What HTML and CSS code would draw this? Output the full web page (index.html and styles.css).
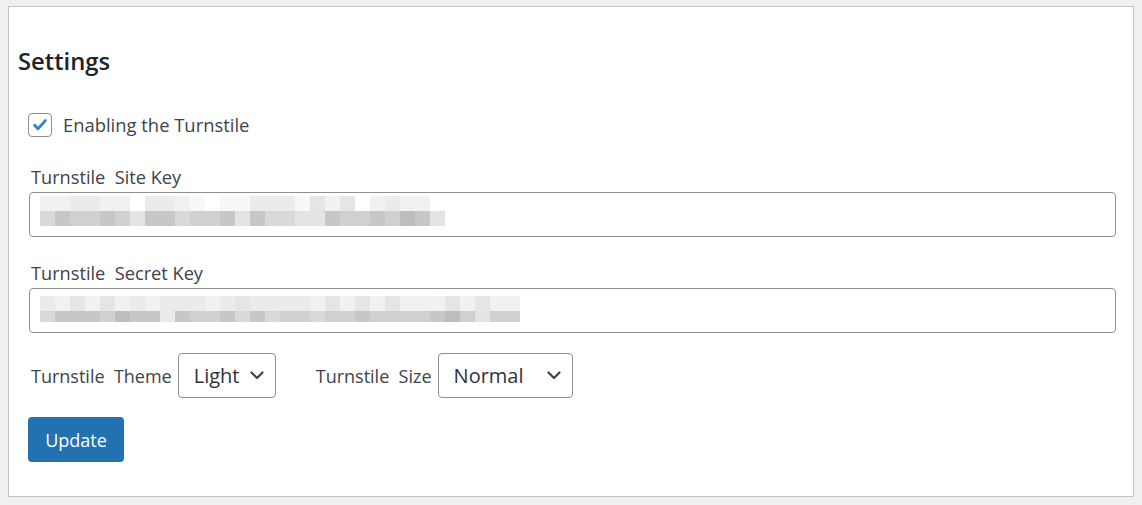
FILE: index.html
```html
<!DOCTYPE html>
<html lang="en">
<head>
<meta charset="utf-8">
<title>Settings</title>
<link rel="stylesheet" href="styles.css">
</head>
<body>
<div class="panel">
  <h2 class="title">Settings</h2>
  <form class="form">
    <label class="check-row">
      <span class="checkbox">
        <svg viewBox="0 0 24 24" width="24" height="24"><path d="M6.2 12.4l3.6 3.8 8-9" fill="none" stroke="#3582c4" stroke-width="3.2" stroke-linecap="round" stroke-linejoin="round"/></svg>
      </span>
      <span class="check-text">Enabling the Turnstile</span>
    </label>

    <div class="field">
      <div class="label">Turnstile&nbsp; Site Key</div>
      <div class="input site">
        <div class="mosaic">
          <div class="row r15"><span class="a"></span><span class="a"></span><span class="b"></span><span class="b"></span><span class="a"></span><span class="a"></span><span class="w"></span><span class="b"></span><span class="b"></span><span class="a"></span><span class="w2"></span><span class="w"></span><span class="w2"></span><span class="w2"></span><span class="b"></span><span class="b"></span><span class="b"></span><span class="w2"></span><span class="c"></span><span class="a"></span><span class="c"></span><span class="w"></span><span class="a"></span><span class="b"></span><span class="a"></span><span class="a"></span></div>
          <div class="row r15"><span class="e"></span><span class="g"></span><span class="f"></span><span class="f"></span><span class="g"></span><span class="f"></span><span class="e2"></span><span class="g"></span><span class="g"></span><span class="e"></span><span class="f"></span><span class="f"></span><span class="g"></span><span class="e2"></span><span class="g"></span><span class="e"></span><span class="e"></span><span class="e2"></span><span class="e2"></span><span class="g"></span><span class="f"></span><span class="f"></span><span class="g"></span><span class="f"></span><span class="h"></span><span class="g"></span><span class="e2"></span></div>
        </div>
      </div>
    </div>

    <div class="field">
      <div class="label">Turnstile&nbsp; Secret Key</div>
      <div class="input secret">
        <div class="mosaic">
          <div class="row r15"><span class="b"></span><span class="a"></span><span class="c"></span><span class="a"></span><span class="c"></span><span class="a"></span><span class="b"></span><span class="a"></span><span class="b"></span><span class="b"></span><span class="b"></span><span class="a"></span><span class="b"></span><span class="c"></span><span class="b"></span><span class="b"></span><span class="b"></span><span class="b"></span><span class="a"></span><span class="c"></span><span class="a"></span><span class="c"></span><span class="a"></span><span class="c"></span><span class="a"></span><span class="a"></span><span class="a"></span><span class="c"></span><span class="a"></span><span class="c"></span><span class="a"></span><span class="a"></span></div>
          <div class="row r11"><span class="e"></span><span class="g"></span><span class="g"></span><span class="g"></span><span class="f"></span><span class="h"></span><span class="g"></span><span class="g"></span><span class="w3"></span><span class="g"></span><span class="f"></span><span class="f"></span><span class="g"></span><span class="e"></span><span class="g"></span><span class="e"></span><span class="f"></span><span class="f"></span><span class="e"></span><span class="f"></span><span class="f"></span><span class="g"></span><span class="f"></span><span class="f"></span><span class="f"></span><span class="f"></span><span class="g"></span><span class="h"></span><span class="f"></span><span class="e2"></span><span class="f"></span><span class="f"></span></div>
        </div>
      </div>
    </div>

    <div class="options">
      <div class="opt">
        <span class="opt-label">Turnstile&nbsp; Theme</span>
        <div class="select theme">
          <span class="select-text">Light</span>
          <svg class="chev" viewBox="0 0 14 9" width="14" height="9"><path d="M1.5 1.5l5.5 5.5 5.5-5.5" fill="none" stroke="#3c434a" stroke-width="2.2" stroke-linecap="round" stroke-linejoin="round"/></svg>
        </div>
      </div>
      <div class="opt">
        <span class="opt-label">Turnstile&nbsp; Size</span>
        <div class="select size">
          <span class="select-text">Normal</span>
          <svg class="chev" viewBox="0 0 14 9" width="14" height="9"><path d="M1.5 1.5l5.5 5.5 5.5-5.5" fill="none" stroke="#3c434a" stroke-width="2.2" stroke-linecap="round" stroke-linejoin="round"/></svg>
        </div>
      </div>
    </div>

    <button type="button" class="btn">Update</button>
  </form>
</div>
</body>
</html>
```
FILE: styles.css
```css
html, body {
  margin: 0;
  padding: 0;
  background: #f0f0f1;
  font-family: "Open Sans", "Noto Sans", sans-serif;
  color: #3c434a;
}
body {
  padding: 6px 8px 8px 8px;
  height: 505px;
  box-sizing: border-box;
}
.panel {
  width: 1126px;
  height: 491px;
  box-sizing: border-box;
  background: #fff;
  border: 1px solid #c3c4c7;
  padding: 0 17px 0 9px;
}
.title {
  margin: 39px 0 0 0;
  font-size: 23.8px;
  line-height: 30px;
  font-weight: 600;
  color: #1d2327;
}
.form {
  padding-left: 10px;
}
.check-row {
  display: flex;
  align-items: center;
  gap: 11px;
  margin-top: 37px;
  height: 24px;
}
.checkbox {
  width: 24px;
  height: 24px;
  box-sizing: border-box;
  border: 1px solid #8c8f94;
  border-radius: 4px;
  display: flex;
  align-items: center;
  justify-content: center;
}
.checkbox svg {
  display: block;
}
.check-text {
  font-size: 18.4px;
  line-height: 24px;
}
.label {
  font-size: 18.2px;
  line-height: 24px;
  padding-left: 3px;
  margin-bottom: 3px;
}
.check-row + .field {
  margin-top: 28px;
}
.field + .field {
  margin-top: 24px;
}
.input {
  margin-left: 1px;
  height: 45px;
  box-sizing: border-box;
  border: 1px solid #8c8f94;
  border-radius: 4px;
  background: #fff;
  padding-left: 10px;
}
.input.site { padding-top: 3px; }
.input.secret { padding-top: 7px; }
.mosaic .row {
  display: flex;
}
.mosaic span {
  width: 15px;
  flex: none;
}
.r15 span { height: 15px; }
.r11 span { height: 11px; }
.a { background: #f1f1f1; }
.b { background: #ebebec; }
.c { background: #e4e5e6; }
.w { background: #ffffff; }
.w2 { background: #f8f8f7; }
.w3 { background: #e9eaec; }
.e { background: #d8d9d9; }
.e2 { background: #e2e4e6; }
.f { background: #cfd0d1; }
.g { background: #c6c7c9; }
.h { background: #bcbdbf; }

.options {
  display: flex;
  align-items: center;
  gap: 40px;
  margin-top: 20px;
  padding-left: 3px;
}
.opt {
  display: flex;
  align-items: center;
  gap: 6px;
}
.opt-label {
  font-size: 18px;
  line-height: 24px;
}
.select {
  height: 45px;
  box-sizing: border-box;
  border: 1px solid #8c8f94;
  border-radius: 4px;
  display: flex;
  align-items: center;
  justify-content: space-between;
  padding: 0 11px 0 15px;
  color: #2c3338;
}
.select.theme { width: 98px; }
.select.size { width: 135px; }
.select-text {
  font-size: 20px;
  line-height: 28px;
}
.chev { display: block; }
.btn {
  margin-top: 19px;
  width: 96px;
  height: 45px;
  border: none;
  border-radius: 4px;
  background: #2271b1;
  color: #fff;
  font-family: "Open Sans", "Noto Sans", sans-serif;
  font-size: 18px;
  padding: 0;
  display: block;
}
```
